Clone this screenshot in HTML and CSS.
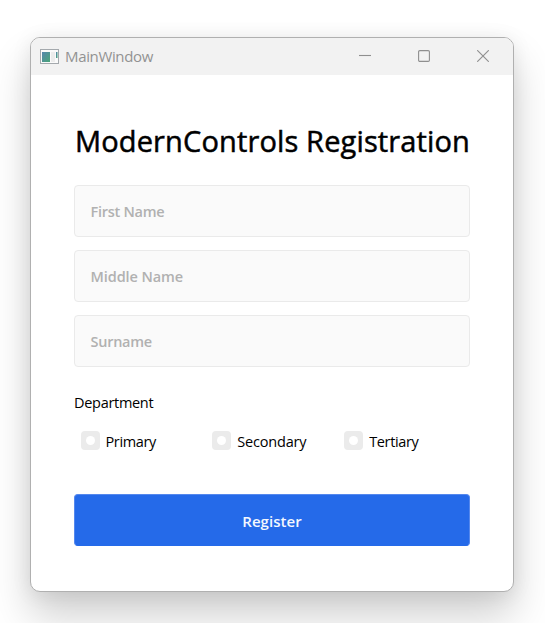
FILE: index.html
```html
<!DOCTYPE html>
<html lang="en">
<head>
<meta charset="utf-8">
<title>MainWindow</title>
<link rel="stylesheet" href="styles.css">
</head>
<body>
<main class="window">
  <header class="titlebar">
    <svg class="app-icon" width="19" height="15" viewBox="0 0 19 15">
      <defs><linearGradient id="g" x1="0" y1="0" x2="1" y2="1"><stop offset="0" stop-color="#5686ad"/><stop offset="1" stop-color="#4aa578"/></linearGradient></defs>
      <rect x=".5" y=".5" width="18" height="14" fill="#fafafa" stroke="#a4a9ad"/>
      <rect x="2" y="3" width="8" height="10" fill="url(#g)"/>
      <rect x="11" y="3" width="4" height="10" fill="#ececec"/>
      <rect x="16" y="3" width="1.5" height="6" fill="url(#g)"/>
    </svg>
    <span class="caption">MainWindow</span>
    <svg class="control" width="12" height="12" viewBox="0 0 12 12"><path d="M0 5.5H12"/></svg>
    <svg class="control" width="12" height="12" viewBox="0 0 12 12"><rect x=".6" y=".6" width="10.8" height="10.8" rx="1.2"/></svg>
    <svg class="control" width="12" height="12" viewBox="0 0 12 12"><path d="M.2 .2L11.8 11.8M11.8 .2L.2 11.8"/></svg>
  </header>
  <form class="form">
    <h1 class="title">ModernControls Registration</h1>
    <div class="field">First Name</div>
    <div class="field middle">Middle Name</div>
    <div class="field">Surname</div>
    <div class="label">Department</div>
    <div class="options">
      <div class="option"><i class="box"></i><span>Primary</span></div>
      <div class="option"><i class="box"></i><span>Secondary</span></div>
      <div class="option"><i class="box"></i><span>Tertiary</span></div>
    </div>
    <button class="register" type="button">Register</button>
  </form>
</main>
</body>
</html>
```
FILE: styles.css
```css
* { box-sizing: border-box; }
body {
  margin: 0;
  height: 623px;
  padding: 37px 31px 31px 30px;
  overflow: hidden;
  background: #fff;
  font-family: "Open Sans", "Noto Sans", sans-serif;
}
.window {
  height: 555px;
  border: 1px solid #b0b0b0;
  border-radius: 10px;
  background: #fff;
  box-shadow: 0 24px 40px rgba(0, 0, 0, .19), 0 2px 20px rgba(0, 0, 0, .08);
}
.titlebar {
  display: flex;
  align-items: center;
  height: 37px;
  padding: 0 24px 1px 9px;
  border-radius: 9px 9px 0 0;
  background: #f2f2f2;
}
.caption {
  margin-left: 6px;
  margin-right: auto;
  font-size: 15px;
  letter-spacing: -.35px;
  color: #929292;
}
.control {
  margin-left: 47px;
  fill: none;
  stroke: #8f8f8f;
  stroke-width: 1.1;
}
.control:last-child { margin-left: 47px; }
.form {
  display: flex;
  flex-direction: column;
  padding: 43px 43px 0;
}
.title {
  margin: 0 0 24px;
  height: 43px;
  padding-left: 1px;
  line-height: 46px;
  font-size: 29px;
  font-weight: 400;
  letter-spacing: .14px;
  -webkit-text-stroke: .5px #000;
  white-space: nowrap;
}
.field {
  display: flex;
  align-items: center;
  height: 52px;
  margin-bottom: 13px;
  padding: 1px 0 0 15.5px;
  border: 1px solid #eaeaea;
  border-radius: 4px;
  background: #fafafa;
  color: #b1b1b1;
  font-size: 14.5px;
  font-weight: 600;
  letter-spacing: -.27px;
}
.field.middle { letter-spacing: -.1px; }
.label {
  margin-top: 12px;
  height: 22px;
  line-height: 22px;
  font-size: 14.5px;
  letter-spacing: -.3px;
}
.options {
  display: grid;
  grid-template-columns: repeat(3, 1fr);
  margin-top: 17px;
  height: 20px;
  padding-left: 6.5px;
  margin-right: -6px;
  font-size: 14.5px;
  letter-spacing: -.35px;
}
.option { display: flex; align-items: center; gap: 6px; }
.option:nth-child(2) { letter-spacing: -.2px; }
.box {
  display: grid;
  place-items: center;
  width: 19px;
  height: 19px;
  margin-bottom: 1px;
  border-radius: 4px;
  background: #ebebeb;
}
.box::before {
  content: "";
  width: 9px;
  height: 9px;
  border-radius: 50%;
  background: #fff;
}
.register {
  margin-top: 43px;
  height: 52px;
  padding: 1px 0 0;
  border: 1px solid #5588ed;
  border-bottom-color: #256ae9;
  border-radius: 4px;
  background: #256ae9;
  color: #f4f7fe;
  font-family: inherit;
  font-size: 15px;
  font-weight: 600;
  letter-spacing: .05px;
}
```
